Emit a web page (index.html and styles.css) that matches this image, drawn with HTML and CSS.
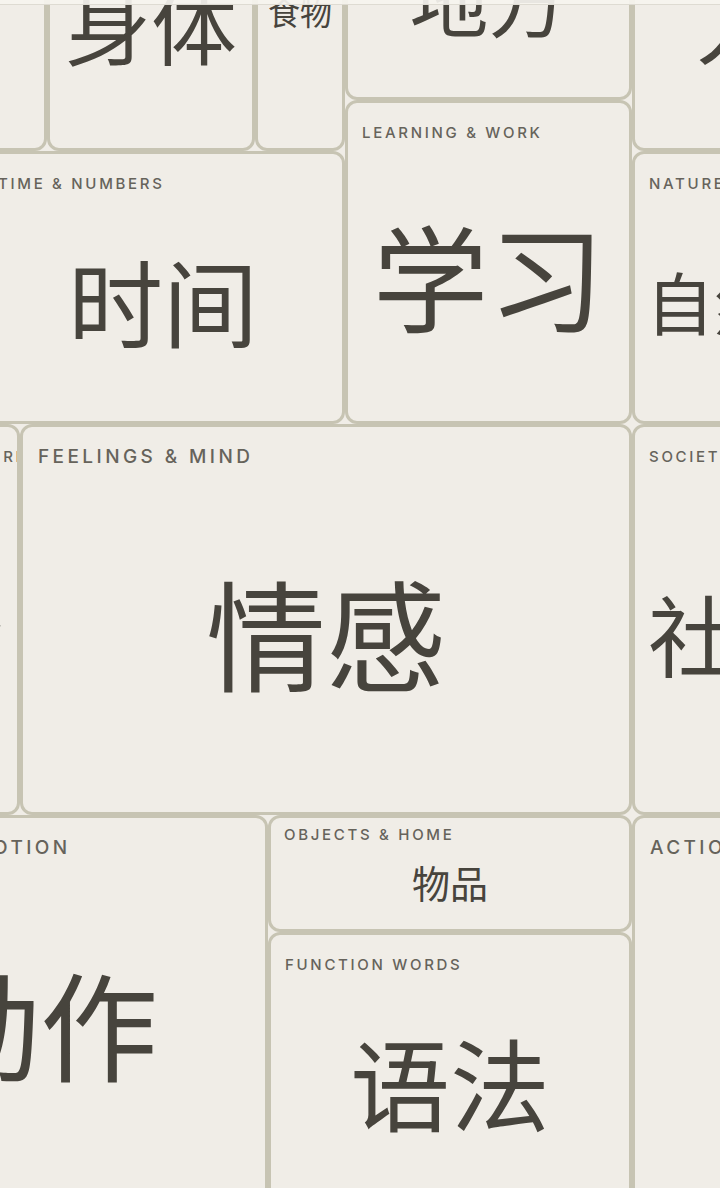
FILE: index.html
```html
<!DOCTYPE html>
<html lang="zh-CN">
<head>
<meta charset="utf-8">
<title>Vocabulary map</title>
<link rel="stylesheet" href="styles.css">
</head>
<body>
<div class="viewport">
  <div class="topbar"></div>
  <main class="map">
    <section class="card card--topleft">
      <span class="label">PLACES &amp; TRAVEL</span>
      <span class="glyph glyph--86"></span>
    </section>
    <section class="card card--body">
      <span class="label">BODY &amp; HEALTH</span>
      <span class="glyph glyph--86">身体</span>
    </section>
    <section class="card card--food">
      <span class="label">FOOD &amp; DRINK</span>
      <span class="glyph glyph--32">食物</span>
    </section>
    <section class="card card--place">
      <span class="label">PLACES</span>
      <span class="glyph glyph--79">地方</span>
    </section>
    <section class="card card--people">
      <span class="label">PEOPLE</span>
      <span class="glyph glyph--86">人物</span>
    </section>

    <section class="card card--time">
      <span class="label">TIME &amp; NUMBERS</span>
      <span class="glyph glyph--95">时间</span>
    </section>
    <section class="card card--learning">
      <span class="label">LEARNING &amp; WORK</span>
      <span class="glyph glyph--116">学习</span>
    </section>
    <section class="card card--nature">
      <span class="label">NATURE &amp; WEATHER</span>
      <span class="glyph glyph--68">自然</span>
    </section>

    <section class="card card--society-left">
      <span class="label">SOCIETY &amp; CULTURE</span>
      <span class="glyph glyph--88">社会</span>
    </section>
    <section class="card card--big card--feelings">
      <span class="label">FEELINGS &amp; MIND</span>
      <span class="glyph glyph--120">情感</span>
    </section>
    <section class="card card--society">
      <span class="label">SOCIETY &amp; CULTURE</span>
      <span class="glyph glyph--88">社会</span>
    </section>

    <section class="card card--big card--motion">
      <span class="label">ACTIONS &amp; MOTION</span>
      <span class="glyph glyph--118">动作</span>
    </section>
    <section class="card card--compact card--objects">
      <span class="label">OBJECTS &amp; HOME</span>
      <span class="glyph glyph--38">物品</span>
    </section>
    <section class="card card--function">
      <span class="label">FUNCTION WORDS</span>
      <span class="glyph glyph--100">语法</span>
    </section>
    <section class="card card--big card--action">
      <span class="label">ACTIONS &amp; MOTION</span>
      <span class="glyph glyph--118">动作</span>
    </section>
  </main>
</div>
</body>
</html>
```
FILE: styles.css
```css
* { box-sizing: border-box; }

html, body {
  margin: 0;
  padding: 0;
  background: #f0ede7;
}

.viewport {
  position: relative;
  width: 720px;
  height: 1188px;
  overflow: hidden;
  background: #f0ede7;
}

.topbar {
  position: absolute;
  top: 0;
  left: 0;
  right: 0;
  height: 5px;
  background: rgba(246, 244, 239, 0.92);
  border-bottom: 1px solid #dedbd2;
  z-index: 2;
}

/* column lines (viewport x): -200 -188 -19 20 47 255 268 345 632 796 840 932 1088 */
/* row lines (viewport y):    -160 -131 100 151 424 815 932 1206 */
.map {
  display: grid;
  grid-template-columns: 12px 169px 39px 27px 208px 13px 77px 287px 164px 44px 92px 156px;
  grid-template-rows: 29px 231px 51px 273px 391px 117px 274px;
  margin: -160px 0 0 -200px;
  width: 1288px;
}

.card {
  display: flex;
  flex-direction: column;
  min-width: 0;
  min-height: 0;
  overflow: hidden;
  background: #f0ede7;
  border: 3px solid #c7c4b3;
  border-radius: 12px;
  padding: 21px 14px 4px;
}

.card--big { padding: 19px 15px 4px; }
.card--compact { padding: 8px 13px 4px; }

.label {
  display: block;
  white-space: nowrap;
  font-family: Inter, "Liberation Sans", sans-serif;
  font-weight: 500;
  font-size: 15px;
  line-height: 1.2;
  letter-spacing: 0.18em;
  color: #66635b;
}

.card--big .label { font-size: 19px; }

.glyph {
  flex: 1;
  display: flex;
  align-items: center;
  justify-content: center;
  white-space: nowrap;
  line-height: 1;
  padding-bottom: 0.12em;
  font-family: "Noto Sans CJK SC", "Noto Sans CJK JP", sans-serif;
  font-weight: 400;
  color: #47443d;
}

.glyph--32 { font-size: 32px; }
.glyph--38 { font-size: 38px; }
.glyph--68 { font-size: 68px; }
.glyph--79 { font-size: 79px; }
.glyph--86 { font-size: 86px; }
.glyph--88 { font-size: 88px; }
.glyph--95 { font-size: 95px; }
.glyph--100 { font-size: 100px; }
.glyph--116 { font-size: 116px; }
.glyph--118 { font-size: 118px; }
.glyph--120 { font-size: 120px; }

.card--topleft      { grid-column: 1 / 5;  grid-row: 2 / 4; }
.card--body         { grid-column: 5 / 6;  grid-row: 2 / 4; }
.card--food         { grid-column: 6 / 8;  grid-row: 1 / 4; }
.card--place        { grid-column: 8 / 9;  grid-row: 2 / 3; }
.card--people       { grid-column: 9 / 12; grid-row: 2 / 4; }
.card--time         { grid-column: 3 / 8;  grid-row: 4 / 5; }
.card--learning     { grid-column: 8 / 9;  grid-row: 3 / 5; }
.card--nature       { grid-column: 9 / 10; grid-row: 4 / 5; }
.card--society-left { grid-column: 2 / 4;  grid-row: 5 / 6; }
.card--feelings     { grid-column: 4 / 9;  grid-row: 5 / 6; }
.card--society      { grid-column: 9 / 11; grid-row: 5 / 6; }
.card--motion       { grid-column: 2 / 7;  grid-row: 6 / 8; }
.card--objects      { grid-column: 7 / 9;  grid-row: 6 / 7; }
.card--function     { grid-column: 7 / 9;  grid-row: 7 / 8; }
.card--action       { grid-column: 9 / 13; grid-row: 6 / 8; }
```
